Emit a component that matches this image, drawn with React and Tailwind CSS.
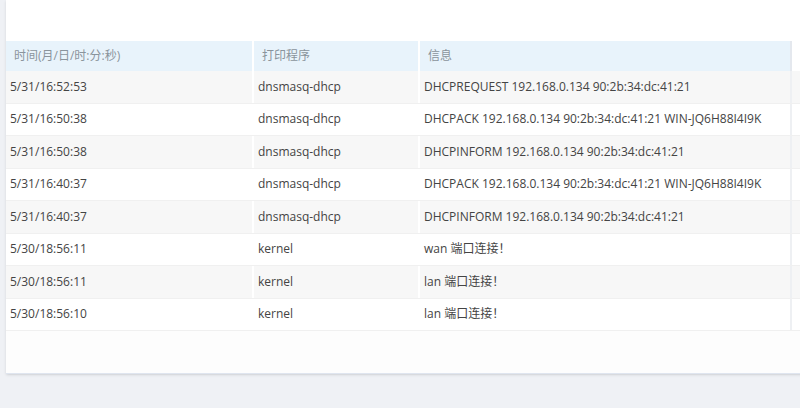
const rows = [
  ["5/31/16:52:53", "dnsmasq-dhcp", "DHCPREQUEST 192.168.0.134 90:2b:34:dc:41:21"],
  ["5/31/16:50:38", "dnsmasq-dhcp", "DHCPACK 192.168.0.134 90:2b:34:dc:41:21 WIN-JQ6H88I4I9K"],
  ["5/31/16:50:38", "dnsmasq-dhcp", "DHCPINFORM 192.168.0.134 90:2b:34:dc:41:21"],
  ["5/31/16:40:37", "dnsmasq-dhcp", "DHCPACK 192.168.0.134 90:2b:34:dc:41:21 WIN-JQ6H88I4I9K"],
  ["5/31/16:40:37", "dnsmasq-dhcp", "DHCPINFORM 192.168.0.134 90:2b:34:dc:41:21"],
  ["5/30/18:56:11", "kernel", "wan 端口连接！"],
  ["5/30/18:56:11", "kernel", "lan 端口连接！"],
  ["5/30/18:56:10", "kernel", "lan 端口连接！"],
];

const App = () => {
  return (
    <div
      className="h-[408px] w-[800px] overflow-hidden bg-[#eff1f5] pl-[6px]"
      style={{ fontFamily: '"Open Sans", "Noto Sans CJK SC", sans-serif' }}
    >
      <div className="h-[374px] w-[800px] border-b border-[#dfe5ef] bg-white pt-[41px] shadow-sm">
        <div className="grid grid-cols-[246px_2px_164px_2px_370px_2px]">
          <div className="flex h-[30px] items-center bg-[#e8f3fb] px-2 text-[12px] text-[#8a949c]">时间(月/日/时:分:秒)</div>
          <div className="bg-white" />
          <div className="flex h-[30px] items-center bg-[#e8f3fb] px-2 text-[12px] text-[#8a949c]">打印程序</div>
          <div className="bg-white" />
          <div className="flex h-[30px] items-center bg-[#e8f3fb] px-2 text-[12px] text-[#8a949c]">信息</div>
          <div className="bg-[#e4e8ee]" />
        </div>
        {rows.map((r, i) => (
          <div
            key={i}
            className={`grid h-[32.5px] grid-cols-[246px_2px_164px_2px_370px_2px] border-b border-[#f0f0f0] text-[12px] text-[#444] ${
              i % 2 === 0 ? "bg-[#f7f7f7]" : "bg-white"
            }`}
          >
            <div className="flex items-center px-1">{r[0]}</div>
            <div className="bg-white" />
            <div className="flex items-center px-1">{r[1]}</div>
            <div className="bg-white" />
            <div className="flex items-center px-1">{r[2]}</div>
            <div className="bg-[#eef0f3]" />
          </div>
        ))}
        <div className="h-[42px] bg-[#fdfdfd]" />
      </div>
    </div>
  );
};

export default App;
